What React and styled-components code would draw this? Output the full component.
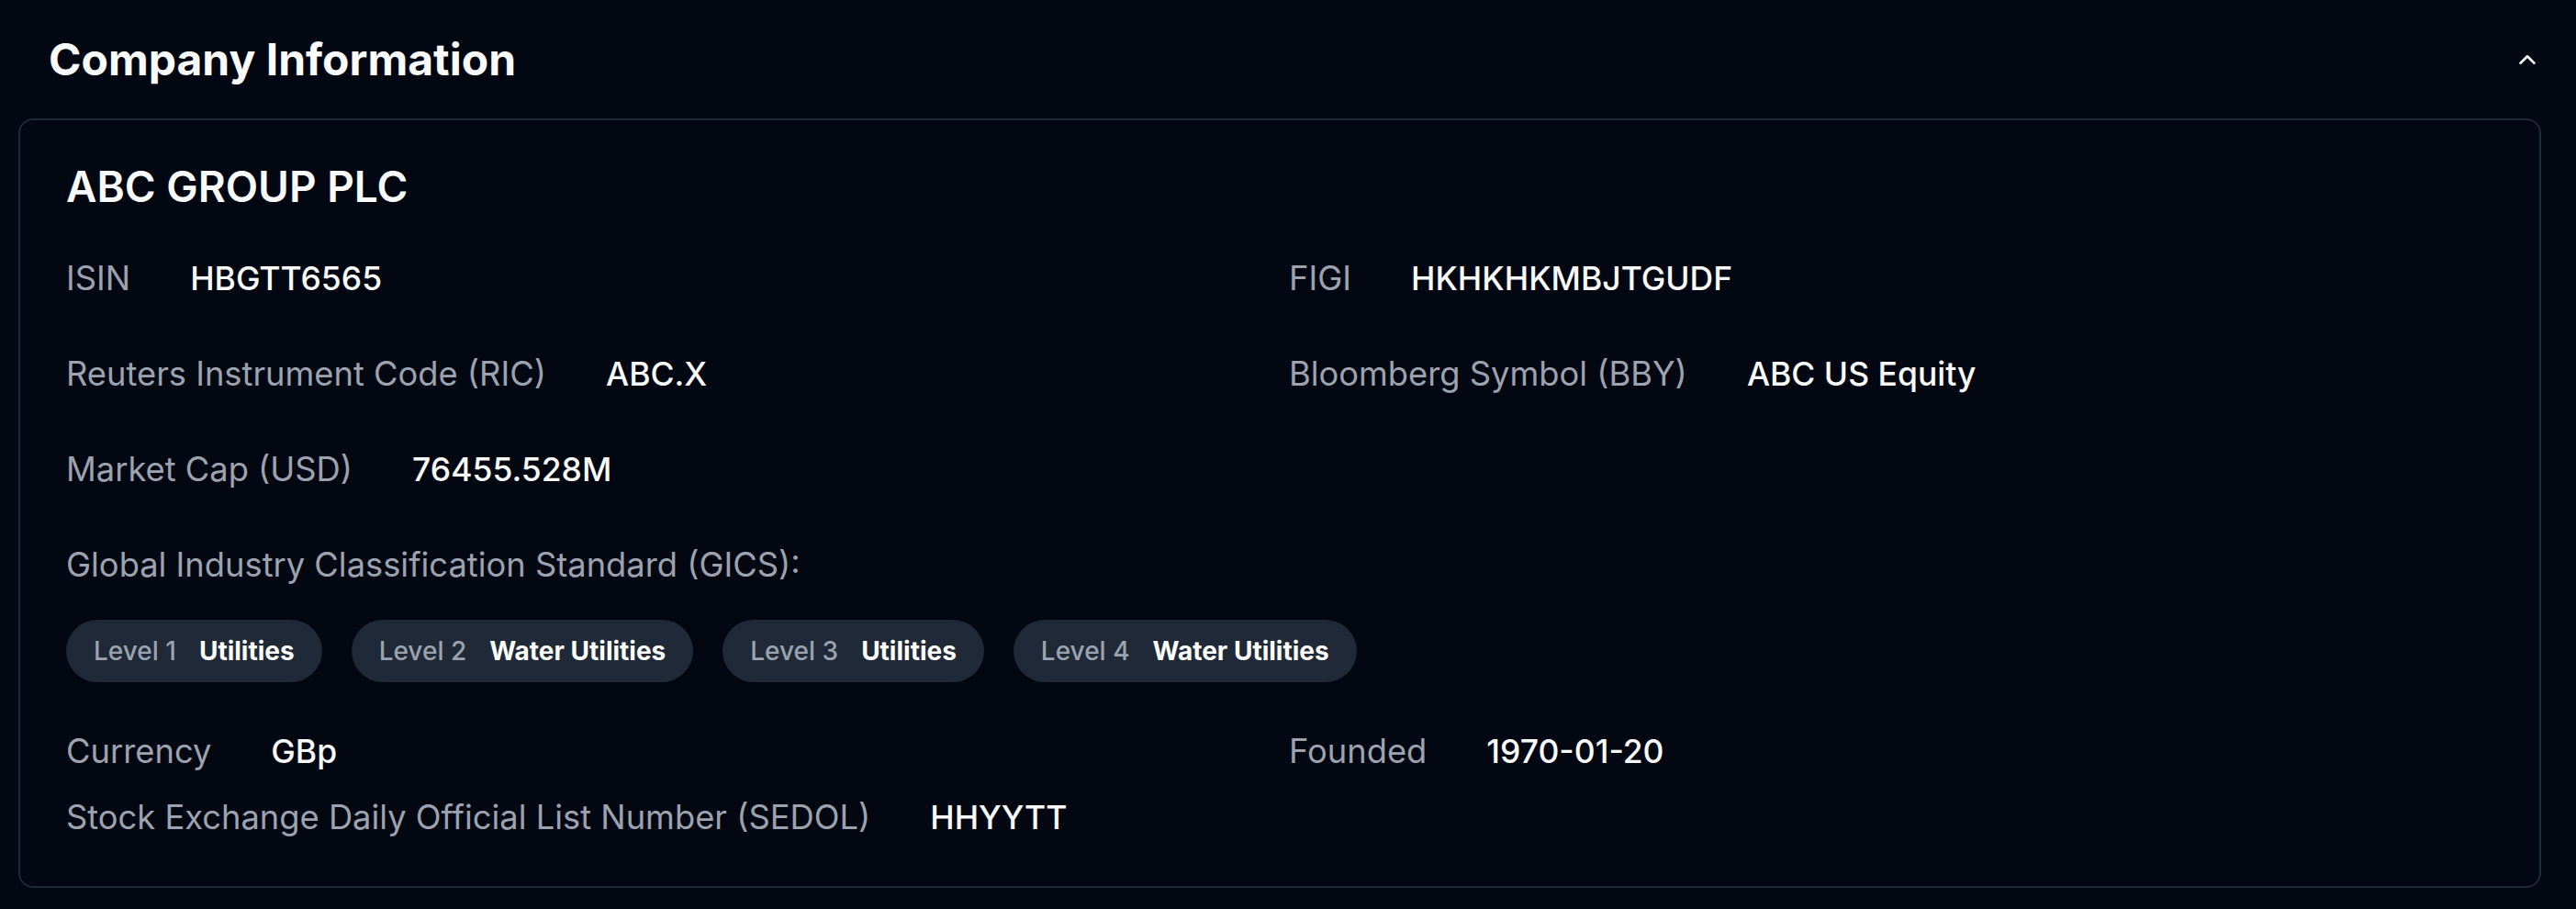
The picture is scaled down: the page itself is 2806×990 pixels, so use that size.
import React from "react";
import styled, { createGlobalStyle } from "styled-components";
import { ChevronUp } from "lucide-react";

const GlobalStyle = createGlobalStyle`
  html, body {
    margin: 0;
    padding: 0;
    background: #030712;
  }
  body {
    font-family: Inter, "Noto Sans", "Liberation Sans", sans-serif;
    color: #f9fafb;
  }
`;

const Page = styled.div`
  width: 2806px;
  height: 990px;
  box-sizing: border-box;
  padding: 0 38px 0 20px;
  background: #030712;
`;

const Header = styled.div`
  display: flex;
  align-items: center;
  justify-content: space-between;
  padding: 37px 0 36px 33px;
`;

const Heading = styled.h2`
  margin: 0;
  font-size: 48px;
  line-height: 56px;
  font-weight: 700;
  color: #f9fafb;
`;

const Toggle = styled.button`
  display: flex;
  align-items: center;
  justify-content: center;
  padding: 0;
  border: 0;
  background: transparent;
  color: #f9fafb;
  cursor: pointer;
`;

const Card = styled.section`
  box-sizing: border-box;
  border: 2px solid #1f2937;
  border-radius: 16px;
  padding: 44px 50px 48px 50px;
`;

const Title = styled.h3`
  margin: 0 0 46px;
  font-size: 46px;
  line-height: 56px;
  font-weight: 600;
  color: #f9fafb;
`;

const Grid = styled.div`
  display: grid;
  grid-template-columns: 1fr 1fr;
  column-gap: 20px;
  row-gap: ${(p) => p.$rowGap}px;
`;

const Field = styled.div`
  display: flex;
  align-items: baseline;
  gap: 65px;
  font-size: 36.3px;
  line-height: 52px;
`;

const Label = styled.span`
  color: #9ca3af;
  font-weight: 400;
`;

const Value = styled.span`
  font-size: 35.5px;
  color: #f9fafb;
  font-weight: 500;
`;

const Gics = styled.div`
  margin-top: 51px;
`;

const GicsLabel = styled.div`
  font-size: 36.3px;
  line-height: 52px;
  color: #9ca3af;
`;

const Chips = styled.div`
  display: flex;
  flex-wrap: wrap;
  gap: 32px;
  margin: 34px 0 49px;
`;

const Chip = styled.div`
  display: flex;
  align-items: center;
  gap: 25px;
  height: 68px;
  box-sizing: border-box;
  padding: 0 30px;
  border-radius: 9999px;
  background: #1f2937;
  font-size: 28px;
  line-height: 1;
`;

const ChipLevel = styled.span`
  color: #9ca3af;
  font-weight: 500;
`;

const ChipName = styled.span`
  color: #ffffff;
  font-weight: 700;
`;

const topFields = [
  ["ISIN", "HBGTT6565"],
  ["FIGI", "HKHKHKMBJTGUDF"],
  ["Reuters Instrument Code (RIC)", "ABC.X"],
  ["Bloomberg Symbol (BBY)", "ABC US Equity"],
  ["Market Cap (USD)", "76455.528M"],
];

const levels = ["Utilities", "Water Utilities", "Utilities", "Water Utilities"];

const bottomFields = [
  ["Currency", "GBp"],
  ["Founded", "1970-01-20"],
  ["Stock Exchange Daily Official List Number (SEDOL)", "HHYYTT"],
];

const App = () => {
  return (
    <Page>
      <GlobalStyle />
      <Header>
        <Heading>Company Information</Heading>
        <Toggle type="button" aria-label="Collapse">
          <ChevronUp size={30} strokeWidth={2} />
        </Toggle>
      </Header>
      <Card>
        <Title>ABC GROUP PLC</Title>
        <Grid $rowGap={51}>
          {topFields.map(([label, value]) => (
            <Field key={label}>
              <Label>{label}</Label>
              <Value>{value}</Value>
            </Field>
          ))}
        </Grid>
        <Gics>
          <GicsLabel>Global Industry Classification Standard (GICS):</GicsLabel>
          <Chips>
            {levels.map((name, i) => (
              <Chip key={i}>
                <ChipLevel>Level {i + 1}</ChipLevel>
                <ChipName>{name}</ChipName>
              </Chip>
            ))}
          </Chips>
        </Gics>
        <Grid $rowGap={19}>
          {bottomFields.map(([label, value]) => (
            <Field key={label}>
              <Label>{label}</Label>
              <Value>{value}</Value>
            </Field>
          ))}
        </Grid>
      </Card>
    </Page>
  );
};

export default App;
